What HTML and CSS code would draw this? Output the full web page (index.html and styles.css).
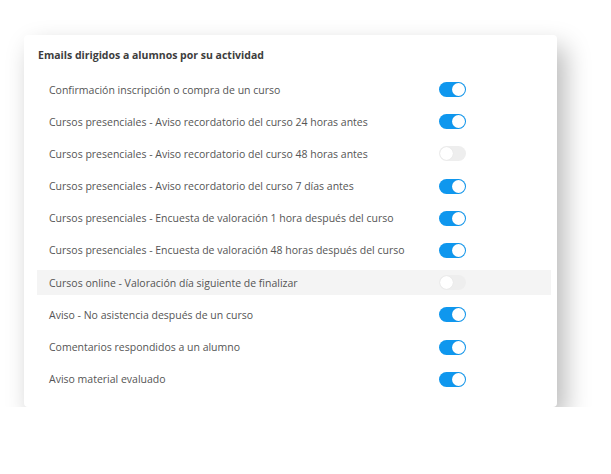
FILE: index.html
```html
<!DOCTYPE html>
<html>
<head>
  <meta charset="UTF-8">
  <title>Emails alumnos</title>
  <link rel="stylesheet" href="styles.css">
</head>
<body>
  <div class="card">
    <h3 class="card-title">Emails dirigidos a alumnos por su actividad</h3>
    <ul class="settings">
      <li class="setting"><span>Confirmación inscripción o compra de un curso</span><span class="switch on"></span></li>
      <li class="setting"><span>Cursos presenciales - Aviso recordatorio del curso 24 horas antes</span><span class="switch on"></span></li>
      <li class="setting"><span>Cursos presenciales - Aviso recordatorio del curso 48 horas antes</span><span class="switch"></span></li>
      <li class="setting"><span>Cursos presenciales - Aviso recordatorio del curso 7 días antes</span><span class="switch on"></span></li>
      <li class="setting"><span>Cursos presenciales - Encuesta de valoración 1 hora después del curso</span><span class="switch on"></span></li>
      <li class="setting"><span>Cursos presenciales - Encuesta de valoración 48 horas después del curso</span><span class="switch on"></span></li>
      <li class="setting hover"><span>Cursos online - Valoración día siguiente de finalizar</span><span class="switch"></span></li>
      <li class="setting"><span>Aviso - No asistencia después de un curso</span><span class="switch on"></span></li>
      <li class="setting"><span>Comentarios respondidos a un alumno</span><span class="switch on"></span></li>
      <li class="setting"><span>Aviso material evaluado</span><span class="switch on"></span></li>
    </ul>
  </div>
</body>
</html>
```

FILE: styles.css
```css
body {
  margin: 0;
  padding: 35px 0 0 24px;
  background: #fff;
  font-family: 'Open Sans', sans-serif;
}

.card {
  width: 533px;
  box-sizing: border-box;
  padding: 12px 6px 15px 13px;
  background: #fff;
  border-radius: 4px;
  box-shadow: 8px 12px 26px rgba(0,0,0,0.28);
}

.card-title {
  margin: 0 0 14px 1px;
  font-size: 10.5px;
  line-height: 16px;
  font-weight: 700;
  color: #3d3d3d;
}

.settings {
  list-style: none;
  margin: 0;
  padding: 0;
  display: flex;
  flex-direction: column;
  gap: 7.2px;
}

.setting {
  display: flex;
  align-items: center;
  justify-content: space-between;
  height: 25px;
  padding: 0 85px 0 12px;
  font-size: 10.5px;
  color: #555;
  white-space: nowrap;
}

.setting.hover {
  background: #f4f4f4;
}

.switch {
  position: relative;
  flex-shrink: 0;
  width: 27px;
  height: 15px;
  border-radius: 8px;
  background: #eeeeee;
}

.switch::after {
  content: "";
  position: absolute;
  top: 1px;
  left: 1px;
  width: 13px;
  height: 13px;
  border-radius: 50%;
  background: #fff;
  box-shadow: 0 0 1px rgba(0,0,0,0.12);
}

.switch.on {
  background: #0f97ee;
}

.switch.on::after {
  left: 13px;
}
```
